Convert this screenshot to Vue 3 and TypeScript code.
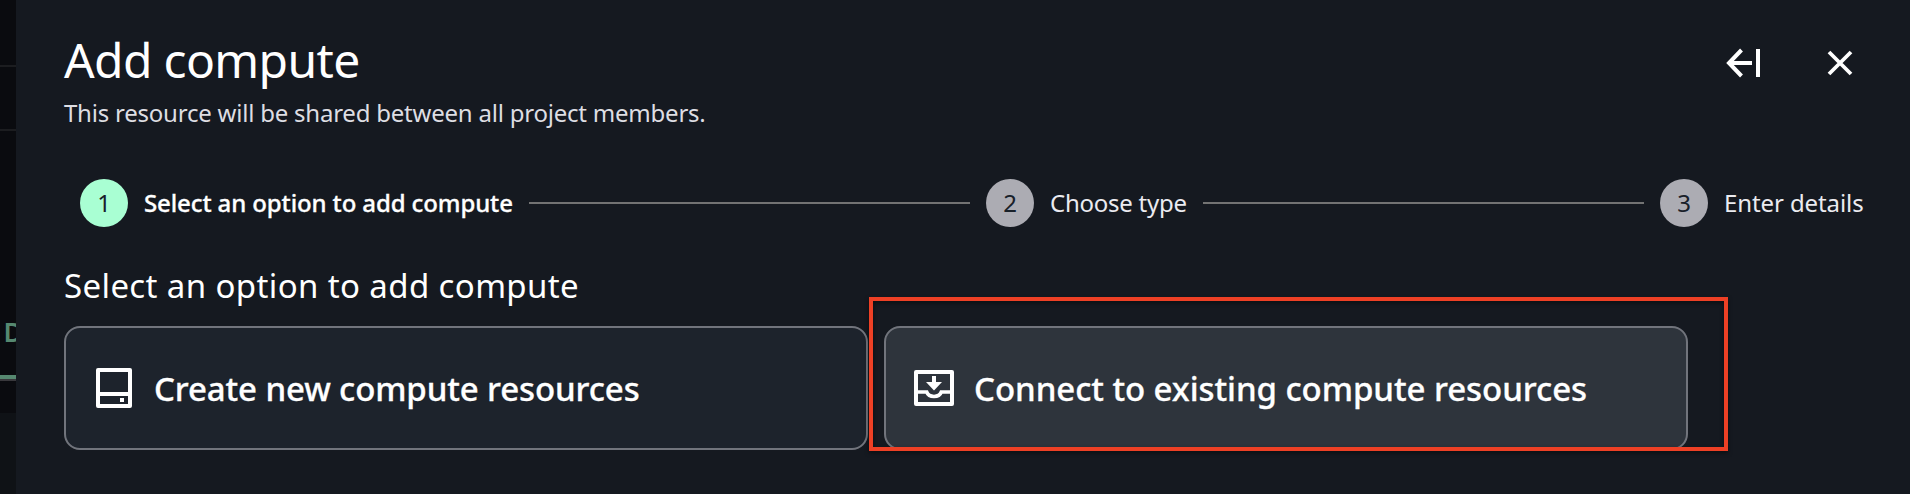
<script setup lang="ts">
interface Step {
  id: number
  label: string
}

interface Option {
  id: 'create' | 'connect'
  label: string
}

const steps: Step[] = [
  { id: 1, label: 'Select an option to add compute' },
  { id: 2, label: 'Choose type' },
  { id: 3, label: 'Enter details' },
]

const options: Option[] = [
  { id: 'create', label: 'Create new compute resources' },
  { id: 'connect', label: 'Connect to existing compute resources' },
]

const activeStep = 1
</script>

<template>
  <div class="page">
    <aside class="backdrop">
      <div class="row row-top"></div>
      <div class="row row-mid"></div>
      <div class="tab">D</div>
      <div class="below"></div>
    </aside>
    <main class="panel">
      <header class="header">
        <div>
          <h1 class="title">Add compute</h1>
          <p class="subtitle">This resource will be shared between all project members.</p>
        </div>
        <div class="actions">
          <button class="action" aria-label="Collapse">
            <svg width="36" height="32" viewBox="0 0 36 32" fill="none" stroke="#fff" stroke-width="4">
              <path d="M26 16H4M15.500 3 3 16l12.500 13M32 2v28" />
            </svg>
          </button>
          <button class="action" aria-label="Close">
            <svg width="28" height="28" viewBox="0 0 28 28" fill="none" stroke="#fff" stroke-width="3.8">
              <path d="M3 3l22 22M25 3 3 25" />
            </svg>
          </button>
        </div>
      </header>

      <nav class="steps">
        <template v-for="(step, index) in steps" :key="step.id">
          <div v-if="index > 0" class="connector"></div>
          <div class="step" :class="{ active: step.id === activeStep }">
            <span class="badge">{{ step.id }}</span>
            <span class="label" :class="`label-${step.id}`">{{ step.label }}</span>
          </div>
        </template>
      </nav>

      <h2 class="heading">Select an option to add compute</h2>

      <div class="cards">
        <div v-for="option in options" :key="option.id" class="card" :class="option.id">
          <svg v-if="option.id === 'create'" class="icon" width="40" height="40" viewBox="0 0 40 40">
            <rect x="4" y="2" width="32" height="36" fill="none" stroke="#fff" stroke-width="4" stroke-linejoin="round" />
            <path d="M4 26h32" stroke="#fff" stroke-width="4" />
            <rect x="26" y="30" width="4" height="4" fill="#fff" />
          </svg>
          <svg v-else class="icon" width="40" height="40" viewBox="0 0 40 40">
            <rect x="2" y="4" width="36" height="32" fill="none" stroke="#fff" stroke-width="4" stroke-linejoin="round" />
            <path d="M3 24H12.7C14 27.5 16.5 28.5 20 28.5S26 27.5 27.3 24H37" fill="none" stroke="#fff" stroke-width="3.6" />
            <path d="M18 8h4v6h6l-8 8.5-8-8.5h6z" fill="#fff" />
          </svg>
          <span class="card-label">{{ option.label }}</span>
        </div>
      </div>
      <div class="highlight"></div>
    </main>
  </div>
</template>

<style>
body {
  margin: 0;
  background: #151920;
}
</style>

<style scoped>
.page {
  display: flex;
  width: 1910px;
  height: 494px;
  overflow: hidden;
  background: #151920;
  color: #fff;
  font-family: "Noto Sans", "Open Sans", sans-serif;
}
.backdrop {
  width: 16px;
  flex: none;
  overflow: hidden;
  background: #0a0b0f;
  display: flex;
  flex-direction: column;
}
.row {
  box-sizing: border-box;
  border-bottom: 2px solid #1c1d20;
}
.row-top { height: 67px; }
.row-mid { height: 64px; }
.tab {
  box-sizing: border-box;
  height: 250px;
  padding: 182px 0 0 3.5px;
  border-bottom: 2px solid #39383c;
  box-shadow: inset 0 -4px #568870;
  color: #568870;
  font-size: 27px;
  font-weight: 600;
  line-height: 38px;
}
.below {
  margin-top: 32px;
  flex: 1;
  background: #0f1216;
}
.panel {
  position: relative;
  box-sizing: border-box;
  flex: 1;
  padding: 0 46px 0 48px;
}
.header {
  display: flex;
  justify-content: space-between;
  height: 179px;
}
.title {
  margin: 30px 0 0;
  font-size: 48px;
  font-weight: 400;
  line-height: 60px;
  letter-spacing: -0.65px;
  white-space: nowrap;
}
.subtitle {
  margin: 7px 0 0;
  font-size: 24px;
  line-height: 32px;
  letter-spacing: -0.22px;
  color: #dedee3;
  white-space: nowrap;
}
.actions {
  display: flex;
  align-items: center;
  gap: 64px;
  height: 36px;
  margin: 45px 10px 0 0;
}
.action {
  display: flex;
  padding: 0;
  border: 0;
  background: none;
}
.steps {
  display: flex;
  align-items: center;
  gap: 16px;
  padding-left: 16px;
  height: 48px;
}
.step {
  display: flex;
  align-items: center;
  gap: 16px;
}
.badge {
  width: 48px;
  height: 48px;
  border-radius: 50%;
  background: #acacb3;
  color: #182029;
  font-size: 24px;
  line-height: 48px;
  text-align: center;
}
.active .badge { background: #a9ffd3; }
.label {
  font-size: 24px;
  line-height: 32px;
  color: #ebebf0;
  white-space: nowrap;
}
.active .label {
  color: #fff;
  font-weight: 500;
  -webkit-text-stroke: 0.3px #fff;
}
.label-1 { width: 369px; letter-spacing: -0.12px; }
.label-2 { width: 137px; letter-spacing: -0.25px; }
.label-3 { width: 140px; letter-spacing: -0.1px; }
.connector {
  flex: 1;
  height: 2px;
  background: #737373;
}
.heading {
  margin: 37px 0 0;
  height: 62px;
  font-size: 33px;
  font-weight: 400;
  line-height: 44px;
  letter-spacing: 0.38px;
  white-space: nowrap;
}
.cards {
  display: flex;
  gap: 16px;
}
.card {
  box-sizing: border-box;
  display: flex;
  align-items: center;
  gap: 20px;
  width: 804px;
  height: 124px;
  padding: 0 28px;
  border: 2px solid #71747c;
  border-radius: 16px;
  background: #1d232c;
}
.card.connect { background: #2e343c; }
.icon { flex: none; }
.card-label {
  padding-top: 2px;
  font-size: 33px;
  font-weight: 500;
  line-height: 44px;
  letter-spacing: -0.12px;
  white-space: nowrap;
  -webkit-text-stroke: 0.3px #fff;
}
.connect .card-label { letter-spacing: -0.06px; }
.highlight {
  position: absolute;
  box-sizing: border-box;
  left: 853px;
  top: 297px;
  width: 859px;
  height: 154px;
  border: 4px solid #ee4025;
  filter: drop-shadow(0 2px 2px rgba(0, 0, 0, 0.5));
}
</style>
